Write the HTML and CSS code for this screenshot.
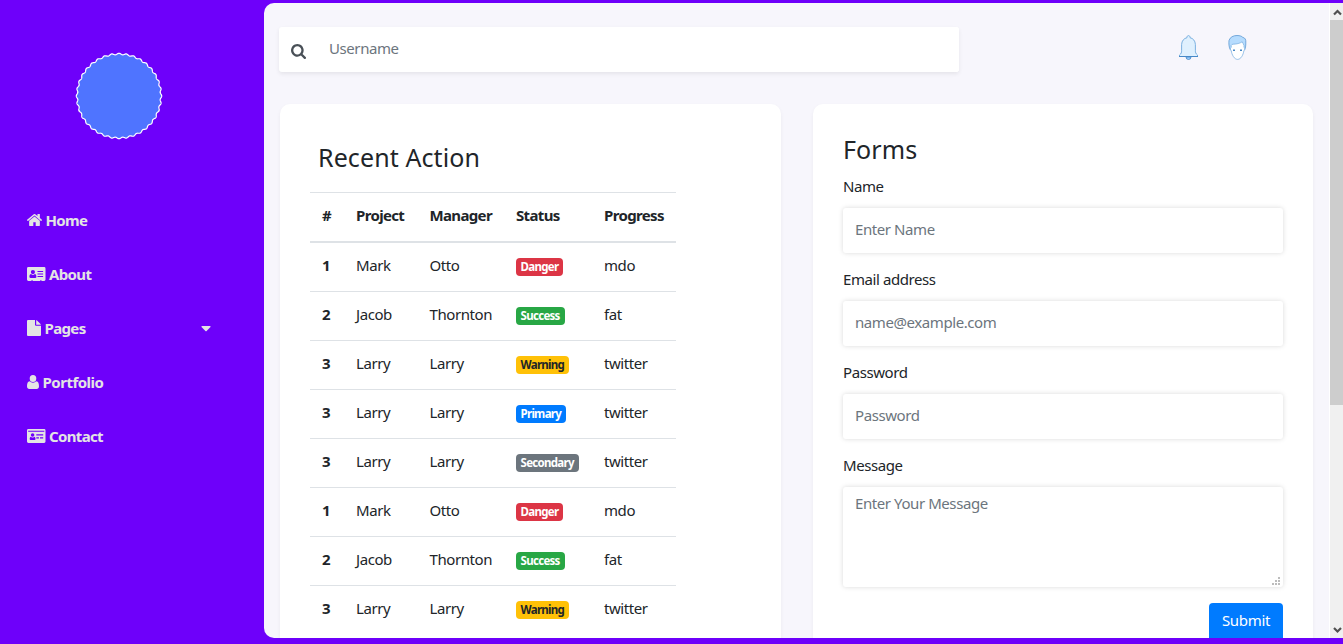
FILE: index.html
```html
<!DOCTYPE html>
<html lang="en">
<head>
<meta charset="utf-8">
<title>Dashboard</title>
<link rel="stylesheet" href="styles.css">
</head>
<body>
<aside class="sidebar">
  <svg class="avatar" viewBox="-44 -44 88 88"><path id="badge" fill="#4f74ff" stroke="#fff" stroke-width="1.2"/></svg>
  <nav class="nav">
    <a class="nav-item"><svg class="ic-home" viewBox="90 256 1612 1290"><path d="M1472 992v480q0 26-19 45t-45 19h-384v-384h-256v384h-384q-26 0-45-19t-19-45v-480q0-1 .5-3t.5-3l575-474 575 474q1 2 1 6zm223-69l-62 74q-8 9-21 11h-3q-13 0-21-7l-692-577-692 577q-12 8-24 7-13-2-21-11l-62-74q-8-10-7-23.5t11-21.5l719-599q32-26 76-26t76 26l244 204v-195q0-14 9-23t23-9h192q14 0 23 9t9 23v408l219 182q10 8 11 21.5t-7 23.5z"/></svg><span class="t-home">Home</span></a>
    <a class="nav-item"><svg class="ic-card" viewBox="0 0 18.5 14"><path fill-rule="evenodd" d="M1.4 0h15.700a1.400 1.400 0 0 1 1.400 1.400v11.200a1.400 1.400 0 0 1-1.400 1.400H14.500v-.8h-1.300v.8H5.700v-.8H4.400v.8H1.400A1.400 1.400 0 0 1 0 12.600V1.400A1.400 1.400 0 0 1 1.400 0zM3.400 11h5c.7 0 1-.5 1-1.200 0-1.700-.5-2.800-1.600-2.800a2.500 2.500 0 0 1-3.700 0C3 7 2.400 8.200 2.400 9.800c0 .7.400 1.200 1 1.200zM5.900 7.200a2.100 2.100 0 1 0 0-4.200 2.100 2.100 0 0 0 0 4.200zM10.500 4h5.600v1h-5.600zM10.500 6.500h5.600v1h-5.600zM10.500 9h5.600v1h-5.600z"/></svg><span class="t-about">About</span></a>
    <a class="nav-item"><svg class="ic-file" viewBox="0 0 14 16"><path d="M8 0v4.700q0 1 1 1H14v9.300q0 1-1 1H1q-1 0-1-1V1q0-1 1-1zM9.200 0q.4.100.8.500l3.300 3.300q.4.400.6.900H9.200z"/></svg><span class="t-pages">Pages</span><svg class="ic-caret" viewBox="0 0 10 6"><path d="M1 0h8q1 .4.500 1.100L5.600 5q-.6.500-1.200 0L.5 1.100Q0 .4 1 0z"/></svg></a>
    <a class="nav-item"><svg class="ic-user" viewBox="0 0 12 14"><path d="M9.300 3.600a3.300 3.500 0 1 1-6.600 0 3.300 3.500 0 0 1 6.600 0zM2.600 6.200a4.700 4.700 0 0 0 6.800 0C11.300 6.300 12 8.700 12 11.200c0 1.700-1 2.800-2.300 2.800H2.300C1 14 0 12.900 0 11.200c0-2.500.7-4.900 2.600-5z"/></svg><span class="t-portfolio">Portfolio</span></a>
    <a class="nav-item"><svg class="ic-card" viewBox="0 0 18.5 14"><path fill-rule="evenodd" d="M1.400 0h15.700a1.400 1.400 0 0 1 1.400 1.400v11.200a1.400 1.400 0 0 1-1.400 1.400H1.400A1.400 1.400 0 0 1 0 12.600V1.400A1.400 1.400 0 0 1 1.400 0zM1.200 1.700v1h16.100v-1zM3.600 11h4c.6 0 .9-.4.900-1 0-1.300-.4-2.200-1.300-2.300a2.200 2.200 0 0 1-3.200 0C3.100 7.800 2.700 8.700 2.700 10c0 .6.300 1 .9 1zM5.600 7.800a1.800 1.800 0 1 0 0-3.600 1.800 1.800 0 0 0 0 3.600zM9.300 5.300h6.900v1.100H9.300zM9.300 8.300h2.600v1.100H9.300zM13 8.300h3.200v1.100H13z"/></svg><span class="t-contact">Contact</span></a>
  </nav>
</aside>
<main class="main">
  <div class="content">
    <header class="topbar">
      <div class="search"><svg viewBox="0 128 1664 1664"><path d="M1152 832q0-185-131.500-316.500t-316.500-131.500-316.500 131.500-131.500 316.500 131.500 316.500 316.500 131.500 316.500-131.500 131.500-316.500zm512 832q0 52-38 90t-90 38q-54 0-90-38l-343-342q-179 124-399 124-143 0-273.500-55.500t-225-150-150-225-55.500-273.500 55.500-273.500 150-225 225-150 273.500-55.500 273.500 55.500 225 150 150 225 55.500 273.500q0 220-124 399l343 343q37 37 37 90z"/></svg><input type="text" placeholder="Username"></div>
      <svg class="bell" viewBox="0 0 19 25"><path d="M7 22a2.500 2.500 0 0 0 5 0z" fill="#98ccfd" stroke="#4788c7" stroke-width=".8"/><path d="M9.500.6c-.9 0-1.500.7-1.500 1.600v.5C5 3.300 2.800 5.700 2.600 9.500v6.200c0 1.500-.2 3-2.100 4.300V21.500h18V20c-1.900-1.300-2.100-2.800-2.100-4.300V9.500C16.200 5.700 14 3.300 11 2.700v-.5c0-.9-.6-1.600-1.500-1.600z" fill="#dff0fe" stroke="#6ea9dc" stroke-width=".9"/><path d="M0 21.500h19" stroke="#4788c7"/></svg>
      <svg class="face" viewBox="0 0 19 25"><path d="M2.500 15C.8 12.500.7 8 1 5.500 2 2 5.500.5 9 .5c3 0 4.700.7 5.800 1.900 2.300.4 3.300 2 3 5.600 0 3-.3 5-1.300 7z" fill="#b6dcfe" stroke="#5c98d2" stroke-width=".8"/><path d="M3.200 12.500V10.300c.4-.8 1-1 2-1.100C9 9 11.500 8.500 14.200 6.800c.3 1.400 1.600 2 1.800 3.700v2c1.200.2 1 2.700-.1 3-.6 4.500-3.100 8.900-6.300 8.900s-5.800-4.400-6.400-8.900c-1.100-.3-1.300-2.800 0-3z" fill="#fff" stroke="#7fb3e2" stroke-width=".8"/><path d="M5 15.300h2M12 15.300h2" stroke="#4788c7" stroke-width="1.400"/></svg>
    </header>
    <div class="cards">
      <section class="card recent">
        <h4 class="title t-recent">Recent Action</h4>
        <table class="table">
          <colgroup><col class="c1"><col class="c2"><col class="c3"><col class="c4"><col class="c5"></colgroup>
          <thead><tr><th>#</th><th>Project</th><th>Manager</th><th>Status</th><th>Progress</th></tr></thead>
          <tbody>
            <tr><th>1</th><td>Mark</td><td>Otto</td><td><span class="badge danger">Danger</span></td><td>mdo</td></tr>
            <tr><th>2</th><td>Jacob</td><td>Thornton</td><td><span class="badge success">Success</span></td><td>fat</td></tr>
            <tr><th>3</th><td>Larry</td><td>Larry</td><td><span class="badge warning">Warning</span></td><td>twitter</td></tr>
            <tr><th>3</th><td>Larry</td><td>Larry</td><td><span class="badge primary">Primary</span></td><td>twitter</td></tr>
            <tr><th>3</th><td>Larry</td><td>Larry</td><td><span class="badge secondary">Secondary</span></td><td>twitter</td></tr>
            <tr><th>1</th><td>Mark</td><td>Otto</td><td><span class="badge danger">Danger</span></td><td>mdo</td></tr>
            <tr><th>2</th><td>Jacob</td><td>Thornton</td><td><span class="badge success">Success</span></td><td>fat</td></tr>
            <tr><th>3</th><td>Larry</td><td>Larry</td><td><span class="badge warning">Warning</span></td><td>twitter</td></tr>
          </tbody>
        </table>
      </section>
      <section class="card forms">
        <h4 class="title">Forms</h4>
        <label>Name</label><input type="text" placeholder="Enter Name">
        <label>Email address</label><input type="text" placeholder="name@example.com">
        <label>Password</label><input type="password" placeholder="Password">
        <label>Message</label>
        <div class="area"><textarea placeholder="Enter Your Message"></textarea><svg class="grip" viewBox="0 0 8 8"><path d="M6 0h2v2H6zM3 3h2v2H3zM6 3h2v2H6zM0 6h2v2H0zM3 6h2v2H3zM6 6h2v2H6z"/></svg></div>
        <button class="submit">Submit</button>
      </section>
    </div>
  </div>
  <div class="scrollbar">
    <svg class="arrow" viewBox="0 0 13 17"><path d="M4 11.500l3.500-3.500 3.500 3.500" fill="none" stroke="#505050" stroke-width="2.200"/></svg>
    <div class="thumb"></div>
    <svg class="arrow down" viewBox="0 0 13 17"><path d="M4 7l3.500 3.500L11 7" fill="none" stroke="#505050" stroke-width="2.200"/></svg>
  </div>
</main>
<script src="script.js"></script>
</body>
</html>
```
FILE: styles.css
```css
* { box-sizing: border-box; }
body {
  margin: 0;
  width: 1343px;
  height: 644px;
  overflow: hidden;
  display: flex;
  background: #6e00fa;
  color: #212529;
  font: 15px/24px "Noto Sans", "Open Sans", sans-serif;
  letter-spacing: -0.42px;
}
.sidebar { width: 264px; flex: none; padding-top: 52px; }
.avatar { display: block; width: 88px; height: 88px; margin-left: 75px; }
.nav { margin-top: 53px; padding-left: 27px; }
.nav-item {
  display: flex;
  align-items: center;
  height: 54px;
  gap: 3.5px;
  color: #e4e4e4;
  font-weight: 700;
  letter-spacing: -0.65px;
}
.nav-item svg { fill: #e4e4e4; flex: none; }
.ic-home { width: 15px; height: 12px; }
.ic-card { width: 18.5px; height: 14px; }
.ic-file { width: 14px; height: 16px; }
.ic-user { width: 12px; height: 14px; }
.nav-item .ic-caret { width: 10px; height: 6px; margin: 2px 53px 0 auto; }
.t-portfolio { letter-spacing: -0.5px; }
.main {
  flex: 1;
  display: flex;
  height: 635px;
  margin-top: 3px;
  background: #f7f6fc;
  border-radius: 10px 0 0 10px;
  overflow: hidden;
}
.content { width: 1065px; flex: none; padding: 24px 16px 0 15px; }
.topbar { display: flex; height: 45px; }
.search {
  display: flex;
  width: 680px;
  background: #fff;
  border-radius: 3px;
  box-shadow: 0 2px 4px rgba(0, 0, 0, .075);
}
.search svg { width: 15px; height: 15px; margin: 17px 0 0 12px; fill: #495057; }
.search input { flex: 1; padding: 0 0 4px 23px; box-shadow: none; height: 45px; }
.bell { width: 19px; height: 25px; margin: 8px 0 0 220px; }
.face { width: 19px; height: 25px; margin: 8px 0 0 30px; }
.cards { display: flex; gap: 32px; margin: 32px 0 0 1px; }
.card {
  height: 700px;
  background: #fff;
  border-radius: 10px;
  box-shadow: 0 2px 4px rgba(0, 0, 0, .05);
}
.recent { width: 501px; padding: 39px 30px; }
.forms { width: 500px; padding: 31px 30px; display: flex; flex-direction: column; }
.title { margin: 0; font-size: 25px; line-height: 29px; font-weight: 400; letter-spacing: 0.1px; }
.t-recent { padding-left: 8px; }
.table { width: 366px; margin-top: 20px; table-layout: fixed; border-spacing: 0; }
.c1 { width: 34px; }
.c2 { width: 73.5px; }
.c3 { width: 86.5px; }
.c4 { width: 88px; }
.c5 { width: 84px; }
.table th, .table td {
  height: 49px;
  padding: 0 0 4px 12px;
  text-align: left;
  white-space: nowrap;
  border-top: 1px solid #dee2e6;
}
.table th { font-weight: 700; letter-spacing: -0.65px; }
.table thead th { height: 51px; border-bottom: 2px solid #dee2e6; }
.table tbody tr:first-child > * { height: 48px; border-top: 0; }
.badge {
  display: block;
  width: fit-content;
  height: 18px;
  margin-top: 4px;
  padding: 0 5px 0 4.5px;
  border-radius: 4px;
  color: #fff;
  font-size: 11.5px;
  font-weight: 700;
  line-height: 17px;
  letter-spacing: -0.7px;
}
.danger { background: #dc3545; }
.success { background: #28a745; }
.warning { background: #ffc107; color: #212529; }
.primary { background: #007bff; }
.secondary { background: #6c757d; }
label { height: 24px; margin-bottom: 10px; }
.title + label { margin-top: 10px; }
input, textarea {
  display: block;
  width: 100%;
  height: 45px;
  padding: 0 12px 4px;
  border: 0;
  border-radius: 3px;
  outline: 0;
  background: #fff;
  font: inherit;
  letter-spacing: inherit;
  box-shadow: 0 0 5px rgba(0, 0, 0, .15);
}
.forms input { margin-bottom: 14px; flex: none; }
::placeholder { color: #6c757d; opacity: 1; }
.area { position: relative; height: 100px; flex: none; }
textarea { height: 100px; padding-top: 4px; resize: none; }
.grip { position: absolute; right: 3px; bottom: 2px; width: 8px; height: 8px; fill: #bcbcbc; }
.submit {
  align-self: flex-end;
  width: 74px;
  height: 38px;
  margin-top: 16px;
  padding: 0 0 4px;
  border: 0;
  border-radius: 4px;
  background: #007bff;
  color: #fff;
  font: inherit;
  letter-spacing: -0.3px;
}
.scrollbar {
  width: 14px;
  height: 635px;
  display: flex;
  flex-direction: column;
  border-left: 1px solid #fff;
  background: #f0f0f0;
}
.arrow { width: 13px; height: 17px; flex: none; }
.thumb { height: 385px; background: #cdcdcd; }
.down { margin-top: auto; }
```
FILE: script.js
```js
// Scalloped outline: a circle whose radius is modulated by 36 waves.
const points = [];
for (let i = 0; i < 720; i++) {
  const a = (i / 360) * Math.PI;
  const r = 42 + 0.7 * Math.cos(36 * a);
  points.push((r * Math.cos(a)).toFixed(2) + " " + (r * Math.sin(a)).toFixed(2));
}
document.getElementById("badge").setAttribute("d", "M" + points.join("L") + "Z");
```
